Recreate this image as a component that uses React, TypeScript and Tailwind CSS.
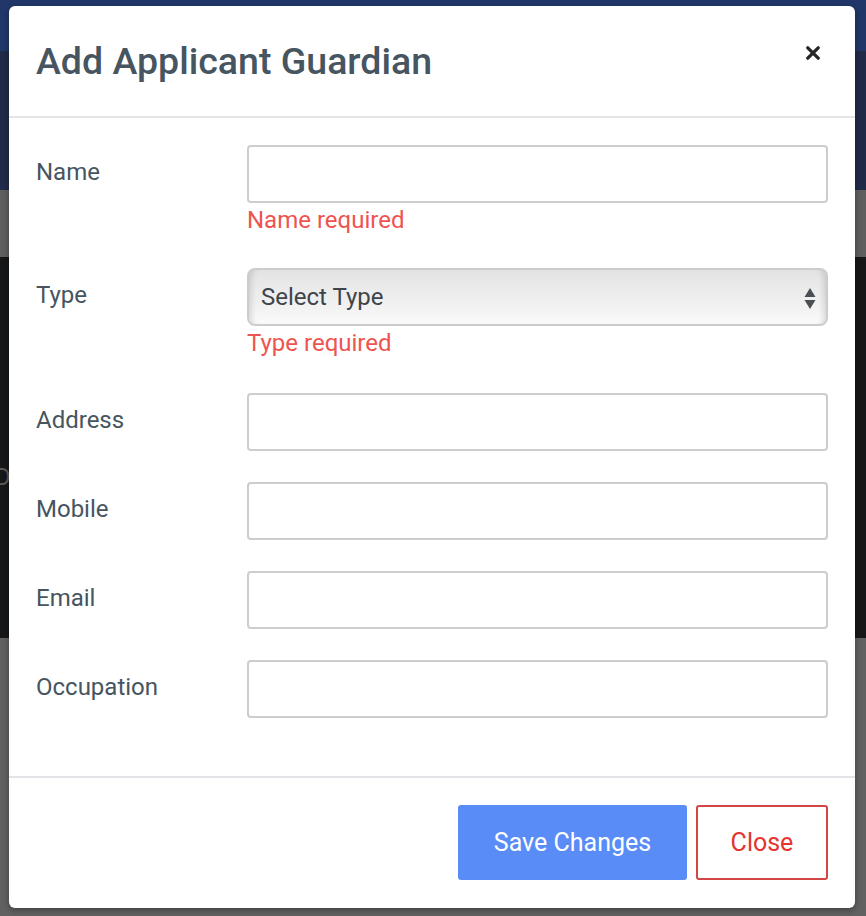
import React from "react";

const fields = [
  { label: "Name", kind: "input", error: "Name required" },
  { label: "Type", kind: "select", error: "Type required" },
  { label: "Address", kind: "input" },
  { label: "Mobile", kind: "input" },
  { label: "Email", kind: "input" },
  { label: "Occupation", kind: "input" },
];

const App = () => {
  return (
    <div className="relative w-[866px] h-[916px] overflow-hidden font-['Roboto','Liberation_Sans',sans-serif]">
      {/* page behind the backdrop */}
      <div className="flex flex-col h-full">
        <div className="h-[51px] bg-[#213769]" />
        <div className="h-[139px] bg-[#202b49]" />
        <div className="h-[67px] bg-[#5f5f5f]" />
        <div className="h-[381px] bg-[#161719] pt-[205px]">
          <span className="block ml-[-5px] text-[24px] leading-[30px] text-[#5c5c5c]">D</span>
        </div>
        <div className="flex-1 bg-[#616161]" />
      </div>

      {/* modal */}
      <div className="absolute left-[9px] top-[6px] w-[846px] h-[902px] flex flex-col bg-white rounded-[6px] shadow-[0_2px_6px_rgba(0,0,0,0.35)]">
        <div className="h-[110px] flex items-center justify-between pl-[27px] pr-[35px] border-b-2 border-[#e3e4e8] box-content">
          <h4 className="text-[37.5px] leading-[54px] font-medium text-[#465560]">
            Add Applicant Guardian
          </h4>
          <button className="self-start mt-[40px] w-[14px] h-[14px] flex items-center justify-center">
            <svg width="14" height="14" viewBox="0 0 14 14">
              <path
                d="M1.8 1.8 L12.2 12.2 M12.2 1.8 L1.8 12.2"
                stroke="#262626"
                strokeWidth="3.3"
                strokeLinecap="round"
              />
            </svg>
          </button>
        </div>

        <div className="h-[658px] px-[27px] pt-[27px]">
          {fields.map((f, i) => (
            <div
              key={f.label}
              className={`flex ${i === 1 ? "mb-[33px]" : "mb-[31px]"}`}
            >
              <label className="w-[211px] shrink-0 pt-[9px] text-[24px] leading-[36px] text-[#465560]">
                {f.label}
              </label>
              <div className="flex-1">
                {f.kind === "input" ? (
                  <input
                    type="text"
                    className="block w-full h-[58px] border-2 border-[#cdcdcd] rounded-[4px] px-[14px] text-[24px] outline-none"
                  />
                ) : (
                  <div className="relative h-[58px] border-2 border-[#cccccc] rounded-[8px] bg-[linear-gradient(to_bottom,#e3e3e3,#f0f0f0_60%,#fafafa)] shadow-[inset_7px_0_6px_-5px_rgba(0,0,0,0.14),inset_-7px_0_6px_-5px_rgba(0,0,0,0.14)] flex items-center pl-[12px]">
                    <span className="text-[24px] leading-[36px] text-[#3f444a]">
                      Select Type
                    </span>
                    <svg
                      className="absolute right-[10px] top-[17px]"
                      width="12"
                      height="22"
                      viewBox="0 0 12 22"
                    >
                      <path d="M6 1 L11.5 10 L0.5 10 Z" fill="#4a4f55" />
                      <path d="M0.5 13 L11.5 13 L6 22 Z" fill="#4a4f55" />
                    </svg>
                  </div>
                )}
                {f.error && (
                  <div className="text-[24px] leading-[34px] text-[#ef5350]">
                    {f.error}
                  </div>
                )}
              </div>
            </div>
          ))}
        </div>

        <div className="flex-1 flex justify-end items-start gap-[9px] px-[27px] pt-[27px] border-t-2 border-[#e3e4e8]">
          <button className="w-[229px] h-[75px] rounded-[3px] bg-[#598cf7] text-white text-[25px]">
            Save Changes
          </button>
          <button className="w-[132px] h-[75px] rounded-[3px] border-2 border-[#d24646] bg-white text-[#e3342f] text-[25px]">
            Close
          </button>
        </div>
      </div>
    </div>
  );
};

export default App;
